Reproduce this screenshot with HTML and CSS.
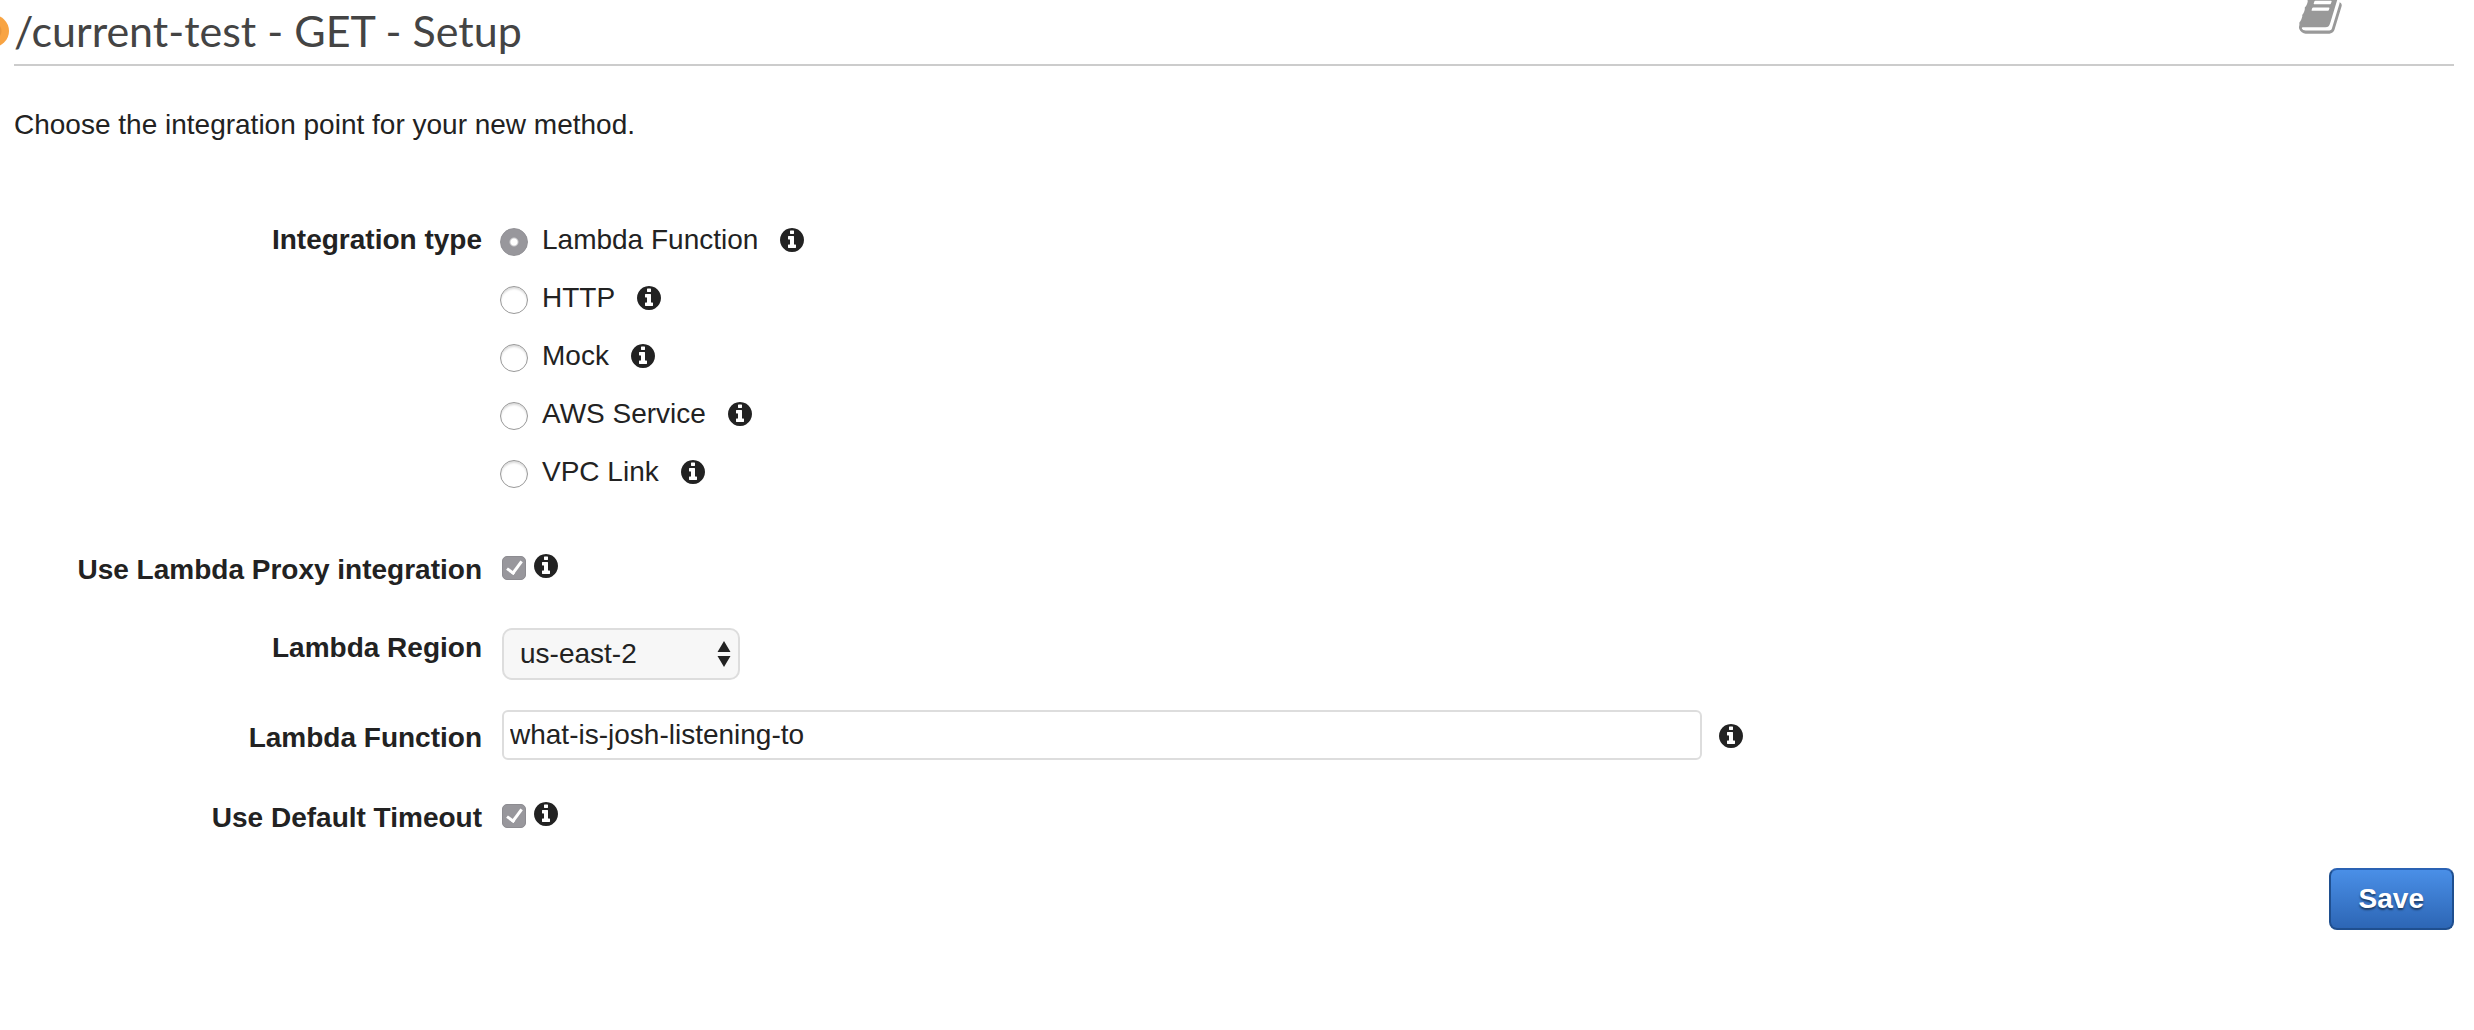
FILE: index.html
```
<!DOCTYPE html>
<html lang="en">
<head>
    <meta charset="UTF-8">
    <meta name="viewport" content="width=device-width, initial-scale=1.0">
    <title>/current-test - GET - Setup</title>
    <link rel="stylesheet" href="styles.css">
</head>
<body>
    <!-- Shared icons -->
    <svg class="icon-defs" aria-hidden="true">
        <symbol id="icon-info" viewBox="128 128 1536 1536">
            <path d="M1152 1376v-160q0-14-9-23t-23-9h-96v-512q0-14-9-23t-23-9h-320q-14 0-23 9t-9 23v160q0 14 9 23t23 9h96v320h-96q-14 0-23 9t-9 23v160q0 14 9 23t23 9h448q14 0 23-9t9-23zm-128-896v-160q0-14-9-23t-23-9h-192q-14 0-23 9t-9 23v160q0 14 9 23t23 9h192q14 0 23-9t9-23zm640 416q0 209-103 385.500t-279.500 279.500-385.500 103-385.500-103-279.500-279.500-103-385.500 103-385.500 279.500-279.500 385.500-103 385.500 103 279.500 279.500 103 385.500z"/>
        </symbol>
    </svg>

    <!-- Header -->
    <header class="page-header">
        <span class="resize-handle"></span>
        <h1>/current-test - GET - Setup</h1>
        <svg class="docs-icon" viewBox="0 0 1792 1792" aria-hidden="true">
            <path d="M1639 478q40 57 18 129l-275 906q-19 64-76.500 107.500t-122.500 43.500h-923q-77 0-148.500-53.500t-99.500-131.500q-24-67-2-127 0-4 3-27t4-37q1-8-3-21.500t-3-19.500q2-11 8-21t16.500-23.500 16.500-23.500q23-38 45-91.500t30-91.500q3-10 .5-30t-.5-28q3-11 17-28t17-23q21-36 42-92t25-90q1-9-2.500-32t.5-28q4-13 22-30.500t22-22.500q19-26 42.500-84.500t27.500-96.500q1-8-3-25.500t-2-26.500q2-8 9-18t18-23 17-21q8-12 16.500-30.500t15-35 16-36 19.500-32 26.500-23.500 36-11.500 47.500 5.500l-1 3q38-9 51-9h761q74 0 114 56t18 130l-274 906q-36 119-71.500 153.500t-128.500 34.500h-869q-27 0-38 15-11 16-1 43 24 70 144 70h923q29 0 56-15.500t35-41.500l300-987q7-22 5-57 38 15 59 43zm-1064 2q-4 13 2 22.500t20 9.500h608q13 0 25.500-9.500t16.500-22.500l21-64q4-13-2-22.500t-20-9.500h-608q-13 0-25.500 9.500t-16.500 22.500zm-83 256q-4 13 2 22.500t20 9.500h608q13 0 25.500-9.500t16.500-22.500l21-64q4-13-2-22.500t-20-9.500h-608q-13 0-25.500 9.500t-16.500 22.500z"/>
        </svg>
    </header>

    <p class="intro">Choose the integration point for your new method.</p>

    <!-- Method setup -->
    <form class="setup-form">
        <div class="row type-row" role="radiogroup" aria-labelledby="type-label">
            <span class="row-label" id="type-label">Integration type</span>
            <div class="options">
                <div class="option">
                    <input type="radio" name="type" id="type-lambda" checked>
                    <label for="type-lambda">Lambda Function</label>
                    <svg class="info"><use href="#icon-info"/></svg>
                </div>
                <div class="option">
                    <input type="radio" name="type" id="type-http">
                    <label for="type-http">HTTP</label>
                    <svg class="info"><use href="#icon-info"/></svg>
                </div>
                <div class="option">
                    <input type="radio" name="type" id="type-mock">
                    <label for="type-mock">Mock</label>
                    <svg class="info"><use href="#icon-info"/></svg>
                </div>
                <div class="option">
                    <input type="radio" name="type" id="type-aws">
                    <label for="type-aws">AWS Service</label>
                    <svg class="info"><use href="#icon-info"/></svg>
                </div>
                <div class="option">
                    <input type="radio" name="type" id="type-vpc">
                    <label for="type-vpc">VPC Link</label>
                    <svg class="info"><use href="#icon-info"/></svg>
                </div>
            </div>
        </div>

        <div class="row check-row">
            <label class="row-label" for="proxy">Use Lambda Proxy integration</label>
            <input type="checkbox" id="proxy" checked>
            <svg class="info"><use href="#icon-info"/></svg>
        </div>

        <div class="row region-row">
            <label class="row-label" for="region">Lambda Region</label>
            <div class="select-wrap">
                <select id="region">
                    <option>us-east-2</option>
                </select>
                <svg class="select-arrows" viewBox="0 0 14 26" aria-hidden="true">
                    <path d="M7 0l6.500 11H.5zM7 26l6.500-11H.5z"/>
                </svg>
            </div>
        </div>

        <div class="row function-row">
            <label class="row-label" for="function">Lambda Function</label>
            <input type="text" id="function" value="what-is-josh-listening-to">
            <svg class="info"><use href="#icon-info"/></svg>
        </div>

        <div class="row check-row">
            <label class="row-label" for="timeout">Use Default Timeout</label>
            <input type="checkbox" id="timeout" checked>
            <svg class="info"><use href="#icon-info"/></svg>
        </div>

        <div class="actions">
            <button type="submit">Save</button>
        </div>
    </form>
</body>
</html>
```

FILE: styles.css
```
/* General */
* {
    box-sizing: border-box;
}

body {
    margin: 0;
    padding: 0 20px 0 14px;
    background: #fff;
    color: #222;
    font-family: "Liberation Sans", Arial, sans-serif;
    font-size: 28px;
    line-height: 32px;
}

.icon-defs {
    display: none;
}

/* Header */
.page-header {
    position: relative;
    padding: 5px 0 7px;
    border-bottom: 2px solid #ccc;
}

.page-header h1 {
    margin: 0;
    color: #444;
    font-family: Lato, sans-serif;
    font-size: 43px;
    font-weight: 400;
    line-height: 52px;
}

.resize-handle {
    position: absolute;
    top: 15px;
    left: -37px;
    width: 32px;
    height: 32px;
    border-radius: 50%;
    background: radial-gradient(circle, #e8963c 8px, #f8a443 9px);
}

.docs-icon {
    position: absolute;
    top: -9px;
    right: 109px;
    width: 46px;
    height: 46px;
    fill: #999;
}

.intro {
    margin: 43px 0 70px;
}

/* Form rows */
.setup-form {
    display: flex;
    flex-direction: column;
    gap: 30px;
}

.row {
    display: flex;
    align-items: flex-start;
}

.row-label {
    flex: 0 0 468px;
    margin-right: 20px;
    font-weight: bold;
    text-align: right;
}

.info {
    flex: none;
    width: 24px;
    height: 24px;
    fill: #222;
}

/* Integration type */
.type-row {
    padding-bottom: 11px;
}

.type-row .row-label {
    line-height: 58px;
}

.option {
    display: flex;
    align-items: center;
    height: 58px;
}

.option .info {
    margin-left: 22px;
}

input[type="radio"] {
    appearance: none;
    width: 28px;
    height: 28px;
    margin: 4px 14px 0 -2px;
    border: 1px solid #999;
    border-radius: 50%;
    background: #fff;
    box-shadow: inset 0 2px 2px #ddd;
}

input[type="radio"]:checked {
    border-color: #929196;
    background: radial-gradient(circle, #fff 3px, #98979c 5px);
    box-shadow: none;
}

/* Checkboxes */
.check-row {
    padding: 12px 0;
}

input[type="checkbox"] {
    appearance: none;
    width: 24px;
    height: 24px;
    margin: 2px 8px 0 0;
    border: 1px solid #8d8c91;
    border-radius: 5px;
    background: #98979c;
}

input[type="checkbox"]:checked::before {
    content: "";
    display: block;
    box-sizing: border-box;
    width: 9px;
    height: 16px;
    margin: 1px 0 0 7px;
    border: solid #fff;
    border-width: 0 3px 3px 0;
    transform: rotate(36deg);
}

/* Region and function */
.region-row .row-label {
    padding-top: 4px;
}

.select-wrap {
    position: relative;
}

select {
    appearance: none;
    display: block;
    width: 238px;
    height: 52px;
    padding: 0 40px 0 16px;
    border: 2px solid #ddd;
    border-radius: 10px;
    background: #f7f7f7;
    color: #222;
    font: inherit;
}

.select-arrows {
    position: absolute;
    top: 13px;
    right: 9px;
    width: 14px;
    height: 26px;
    fill: #222;
    pointer-events: none;
}

.function-row .row-label {
    padding-top: 12px;
}

input[type="text"] {
    flex: 0 1 1200px;
    min-width: 0;
    height: 50px;
    padding: 0 6px;
    border: 2px solid #ddd;
    border-radius: 6px;
    background: #fff;
    color: #222;
    font: inherit;
}

.function-row .info {
    margin: 14px 0 0 17px;
}

/* Actions */
.actions {
    display: flex;
    justify-content: flex-end;
    margin-top: -8px;
}

button {
    height: 62px;
    padding: 0 28px;
    border: 2px solid #1f4f8f;
    border-top-color: #2a62b4;
    border-radius: 8px;
    background: linear-gradient(#4a8fe7, #2d66b5);
    color: #fff;
    font: inherit;
    font-weight: bold;
    text-shadow: 0 2px 2px rgba(0, 0, 0, 0.5);
}
```
